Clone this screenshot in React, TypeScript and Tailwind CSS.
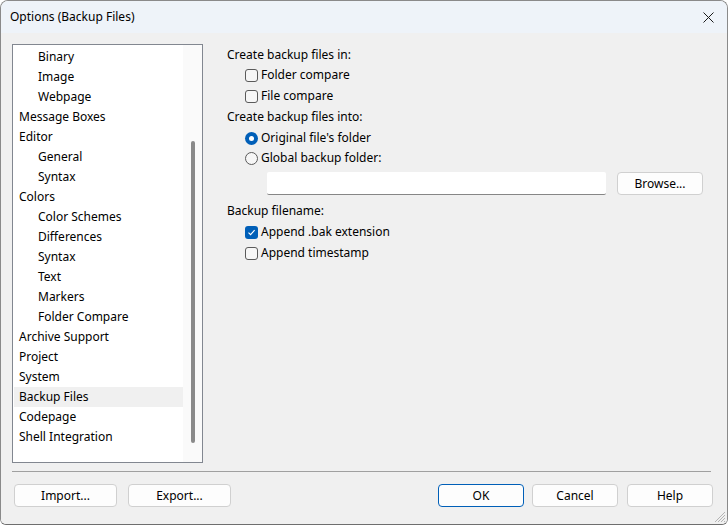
import React from "react";

const font = { fontFamily: '"Noto Sans", "Open Sans", sans-serif' };

type Item = { label: string; child?: boolean; selected?: boolean };
const items: Item[] = [
  { label: "Binary", child: true },
  { label: "Image", child: true },
  { label: "Webpage", child: true },
  { label: "Message Boxes" },
  { label: "Editor" },
  { label: "General", child: true },
  { label: "Syntax", child: true },
  { label: "Colors" },
  { label: "Color Schemes", child: true },
  { label: "Differences", child: true },
  { label: "Syntax", child: true },
  { label: "Text", child: true },
  { label: "Markers", child: true },
  { label: "Folder Compare", child: true },
  { label: "Archive Support" },
  { label: "Project" },
  { label: "System" },
  { label: "Backup Files", selected: true },
  { label: "Codepage" },
  { label: "Shell Integration" },
];

function Checkbox({ checked, label, className = "" }: { checked?: boolean; label: string; className?: string }) {
  return (
    <div className={`flex h-[20px] items-center pl-[18px] ${className}`}>
      {checked ? (
        <span className="flex h-[13px] w-[13px] items-center justify-center rounded-[3px] bg-[#005fb8]">
          <svg width="9" height="9" viewBox="0 0 9 9">
            <path d="M1.5 4.6 L3.6 6.7 L7.6 2.2" fill="none" stroke="#fff" strokeWidth="1.1" />
          </svg>
        </span>
      ) : (
        <span className="h-[13px] w-[13px] rounded-[3px] border border-[#5a5a5a] bg-[#f6f6f6]" />
      )}
      <span className="ml-[3px] text-[12px] text-black">{label}</span>
    </div>
  );
}

function Radio({ checked, label, className = "" }: { checked?: boolean; label: string; className?: string }) {
  return (
    <div className={`flex h-[20px] items-center pl-[18px] ${className}`}>
      {checked ? (
        <span className="flex h-[13px] w-[13px] items-center justify-center rounded-full bg-[#005fb8]">
          <span className="h-[5px] w-[5px] rounded-full bg-white" />
        </span>
      ) : (
        <span className="h-[13px] w-[13px] rounded-full border border-[#5a5a5a] bg-[#f6f6f6]" />
      )}
      <span className="ml-[3px] text-[12px] text-black">{label}</span>
    </div>
  );
}

function Button({ label, w, primary }: { label: string; w: string; primary?: boolean }) {
  return (
    <div
      className={`flex h-[23px] items-center justify-center rounded-[4px] bg-[#fdfdfd] text-[12px] text-black ${w} ${
        primary ? "border border-[#005fb8]" : "border border-[#d0d0d0]"
      }`}
    >
      {label}
    </div>
  );
}

export default function App() {
  return (
    <div className="h-[525px] w-[728px] bg-white" style={font}>
      <div className="flex h-[525px] w-[728px] flex-col overflow-hidden rounded-t-[8px] rounded-b-[6px] border border-[#8a8a8a] border-b-[#6e6e6e]">
        {/* Title bar */}
        <div className="flex h-[32px] shrink-0 items-center justify-between bg-[#eef3f9] pl-[9px] pr-[13px]">
          <span className="text-[12px] text-black">Options (Backup Files)</span>
          <svg width="11" height="11" viewBox="0 0 11 11">
            <path d="M0.5 0.5 L10.5 10.5 M10.5 0.5 L0.5 10.5" stroke="#1a1a1a" strokeWidth="1" />
          </svg>
        </div>

        {/* Body */}
        <div className="relative flex flex-1 flex-col bg-[#f0f0f0]">
          <div className="flex pl-[11px] pt-[11px]">
            {/* List box */}
            <div className="flex h-[419px] w-[191px] border border-[#828790] bg-white">
              <div className="flex w-[170px] flex-col pl-[1px] pt-[2px]">
                {items.map((it, i) => (
                  <div
                    key={i}
                    className={`flex h-[20px] items-center text-[12px] text-black ${it.child ? "pl-[24px]" : "pl-[5px]"} ${
                      it.selected ? "bg-[#f0f0f0]" : ""
                    }`}
                  >
                    {it.label}
                  </div>
                ))}
              </div>
              <div className="flex flex-1 justify-center bg-[#fafafa] pt-[96px]">
                <div className="ml-[1px] h-[302px] w-[4px] rounded-full bg-[#8a8a8a]" />
              </div>
            </div>

            {/* Right panel */}
            <div className="ml-[24px] flex flex-1 flex-col pr-[24px] pt-[1px]">
              <div className="flex h-[20px] items-center text-[12px] text-black">Create backup files in:</div>
              <Checkbox label="Folder compare" />
              <Checkbox label="File compare" className="mt-[1px]" />
              <div className="mt-[1px] flex h-[20px] items-center text-[12px] text-black">Create backup files into:</div>
              <Radio checked label="Original file's folder" className="mt-[1px]" />
              <Radio label="Global backup folder:" />
              <div className="mt-[4px] flex items-center pl-[40px]">
                <div className="h-[23px] w-[339px] rounded-[2px] border-b border-[#868686] bg-white" />
                <div className="ml-[11px]">
                  <Button label="Browse..." w="w-[86px]" />
                </div>
              </div>
              <div className="mt-[6px] flex h-[20px] items-center text-[12px] text-black">Backup filename:</div>
              <Checkbox checked label="Append .bak extension" className="mt-[1px]" />
              <Checkbox label="Append timestamp" className="mt-[1px]" />
            </div>
          </div>

          {/* Separator */}
          <div className="ml-[11px] mt-[8px] h-[1px] w-[699px] bg-[#a0a0a0]" />

          {/* Buttons */}
          <div className="mt-[12px] flex items-center pl-[13px]">
            <Button label="Import..." w="w-[103px]" />
            <div className="ml-[11px]">
              <Button label="Export..." w="w-[103px]" />
            </div>
            <div className="ml-[207px]">
              <Button label="OK" w="w-[86px]" primary />
            </div>
            <div className="ml-[8px]">
              <Button label="Cancel" w="w-[86px]" />
            </div>
            <div className="ml-[9px]">
              <Button label="Help" w="w-[86px]" />
            </div>
          </div>

          {/* Resize grip */}
          <svg className="absolute bottom-[1px] right-[1px]" width="13" height="13" viewBox="0 0 13 13">
            <path
              d="M12 2 L2 12 M12 5 L5 12 M12 8 L8 12 M12 11 L11 12"
              stroke="#b4b4b4"
              strokeWidth="1"
            />
          </svg>
        </div>
      </div>
    </div>
  );
}
